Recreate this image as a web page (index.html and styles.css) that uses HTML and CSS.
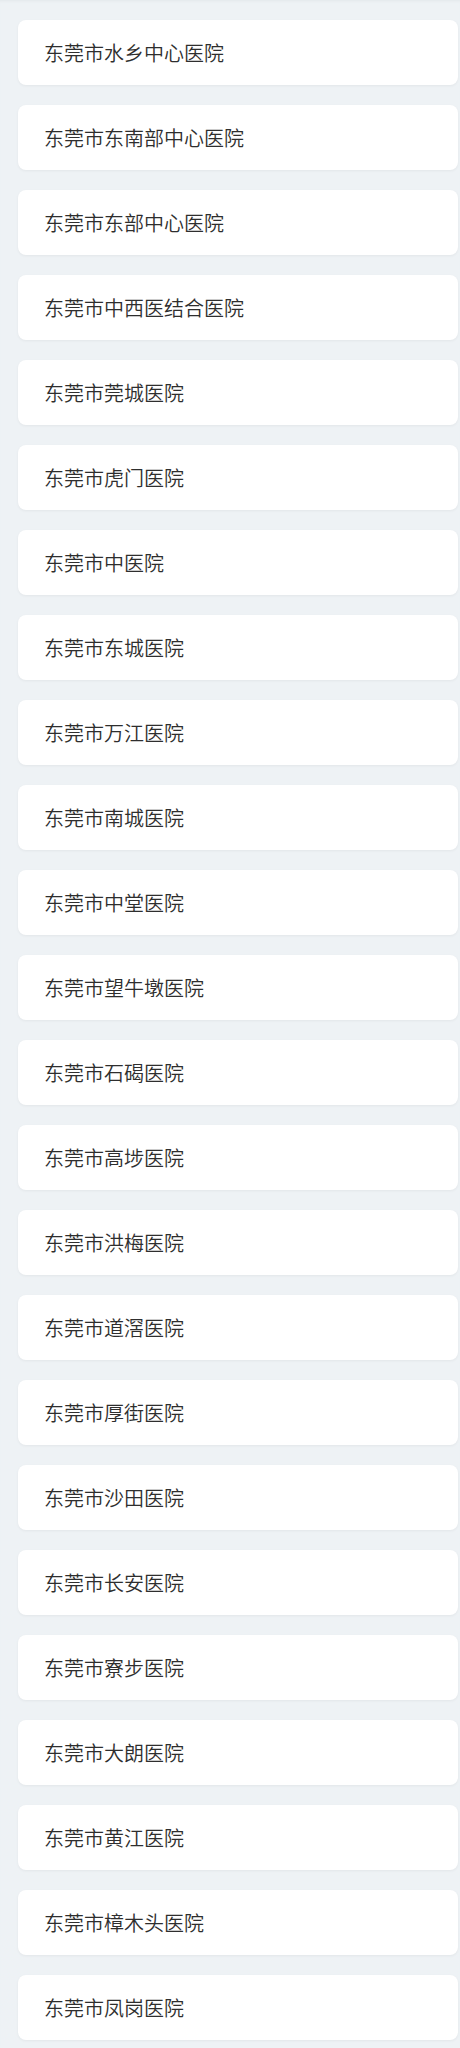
FILE: index.html
```html
<!DOCTYPE html>
<html lang="zh-CN">
<head>
<meta charset="utf-8">
<title>医院列表</title>
<link rel="stylesheet" href="styles.css">
</head>
<body>
<ul class="list">
<li class="card">东莞市水乡中心医院</li>
<li class="card">东莞市东南部中心医院</li>
<li class="card">东莞市东部中心医院</li>
<li class="card">东莞市中西医结合医院</li>
<li class="card">东莞市莞城医院</li>
<li class="card">东莞市虎门医院</li>
<li class="card">东莞市中医院</li>
<li class="card">东莞市东城医院</li>
<li class="card">东莞市万江医院</li>
<li class="card">东莞市南城医院</li>
<li class="card">东莞市中堂医院</li>
<li class="card">东莞市望牛墩医院</li>
<li class="card">东莞市石碣医院</li>
<li class="card">东莞市高埗医院</li>
<li class="card">东莞市洪梅医院</li>
<li class="card">东莞市道滘医院</li>
<li class="card">东莞市厚街医院</li>
<li class="card">东莞市沙田医院</li>
<li class="card">东莞市长安医院</li>
<li class="card">东莞市寮步医院</li>
<li class="card">东莞市大朗医院</li>
<li class="card">东莞市黄江医院</li>
<li class="card">东莞市樟木头医院</li>
<li class="card">东莞市凤岗医院</li>
</ul>
</body>
</html>
```
FILE: styles.css
```css
html, body {
  margin: 0;
  padding: 0;
  background: #eef2f5;
}
body {
  font-family: "Noto Sans CJK SC", "Noto Sans", sans-serif;
  color: #2e2e2e;
  box-shadow: inset 0 3px 3px -2px #e2e7ea;
}
.list {
  list-style: none;
  margin: 0;
  padding: 20px 2px 20px 18px;
  display: flex;
  flex-direction: column;
  gap: 20px;
}
.card {
  height: 65px;
  box-sizing: border-box;
  display: flex;
  align-items: center;
  padding-left: 26px;
  background: #fff;
  border-radius: 8px;
  box-shadow: 0 1px 3px rgba(0, 0, 0, 0.05);
  font-size: 20px;
  font-weight: 350;
  line-height: 1;
}
```
